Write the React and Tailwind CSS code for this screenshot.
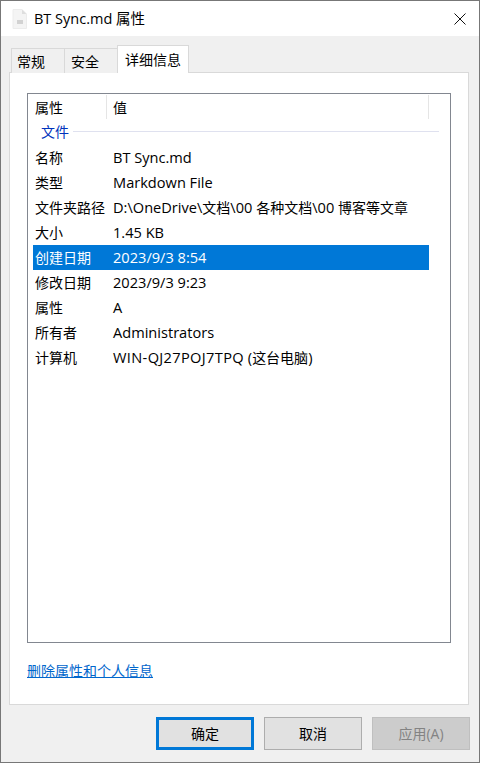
const Z = ({ children }) => <span className="text-[14px]">{children}</span>;

const rows = [
  ["名称", <>BT Sync.md</>],
  ["类型", <>Markdown File</>],
  ["文件夹路径", <>D:\OneDrive\<Z>文档</Z>\00 <Z>各种文档</Z>\00 <Z>博客等文章</Z></>],
  ["大小", <>1.45 KB</>],
  ["创建日期", <>2023/9/3 8:54</>, true],
  ["修改日期", <>2023/9/3 9:23</>],
  ["属性", <>A</>],
  ["所有者", <>Administrators</>],
  ["计算机", <><span className="tracking-[0.35px]">WIN-QJ27POJ7TPQ</span> (<Z>这台电脑</Z>)</>],
];

function FileIcon() {
  return (
    <svg width="16" height="20" viewBox="0 0 16 20" className="shrink-0">
      <path d="M1 0.5H10L14.5 5V19.5H1Z" fill="#f4f4f4" stroke="#ececec" />
      <path d="M10 0.5V5H14.5Z" fill="#dedede" />
      <rect x="5" y="11" width="6" height="4" fill="#d2d2d2" />
    </svg>
  );
}

function Btn({ children, cls }) {
  return (
    <div className={`w-[98px] h-[33px] flex items-center justify-center text-[14px] ${cls}`}>{children}</div>
  );
}

export default function App() {
  return (
    <div className="w-[480px] h-[763px] border border-[#777777] bg-[#f0f0f0] flex flex-col text-[14px] text-black overflow-hidden font-['Open_Sans','Noto_Sans_CJK_SC',sans-serif]">
      <div className="h-[35px] bg-white flex items-center pl-[11px] shrink-0">
        <FileIcon />
        <span className="ml-[6px] text-[14.5px] leading-[20px]">BT Sync.md 属性</span>
        <svg width="12" height="12" viewBox="0 0 12 12" className="ml-auto mr-[13px]">
          <path d="M0.5 0.5L11.5 11.5M11.5 0.5L0.5 11.5" stroke="#111" strokeWidth="1" fill="none" />
        </svg>
      </div>

      <div className="flex pl-[10px] pt-[10px] h-[37px] shrink-0 items-end relative z-10">
        <div className="w-[54px] h-[25px] border border-b-0 border-[#d9d9d9] bg-[#f0f0f0] flex items-center pl-[5px]">常规</div>
        <div className="w-[53px] h-[25px] border border-b-0 border-l-0 border-[#d9d9d9] bg-[#f0f0f0] flex items-center pl-[6px]">安全</div>
        <div className="w-[72px] h-[28px] -ml-px border border-b-0 border-[#d9d9d9] bg-white flex items-center pl-[7px]">详细信息</div>
      </div>

      <div className="mx-[8px] w-[460px] h-[633px] border border-[#d9d9d9] bg-white flex flex-col pl-[17px] pt-[19px] shrink-0 -mt-px">
        <div className="w-[424px] h-[550px] border border-[#828790] shrink-0 pl-[5px] pr-[21px] pt-[1px] mt-px">
          <div className="flex h-[24px] items-center">
            <div className="w-[74px] h-full border-r border-[#e5e5e5] flex items-center pl-[2px]">属性</div>
            <div className="flex-1 h-full border-r border-[#e5e5e5] flex items-center pl-[6px]">值</div>
          </div>
          <div className="flex items-center h-[24px] -mr-[10px] pl-[8px] text-[#0033bc]">
            <span>文件</span>
            <div className="flex-1 h-px bg-[#dfe1ef] ml-[4px]" />
          </div>
          <div className="mt-[2px]">
            {rows.map(([k, v, sel]) => (
              <div key={k} className={`flex h-[25px] items-center ${sel ? "bg-[#0078d7] text-white" : ""}`}>
                <div className="w-[80px] pl-[2px] whitespace-nowrap">{k}</div>
                <div className="whitespace-nowrap text-[14.6px]">{v}</div>
              </div>
            ))}
          </div>
        </div>
        <div className="mt-[19px] leading-[18px] text-[#0066cc] underline">删除属性和个人信息</div>
      </div>

      <div className="flex justify-end gap-[10px] pr-[9px] pt-[12px]">
        <Btn cls="bg-[#e1e1e1] border-[3px] border-[#0078d7]">确定</Btn>
        <Btn cls="bg-[#e1e1e1] border border-[#adadad]">取消</Btn>
        <Btn cls="bg-[#cccccc] border border-[#bfbfbf] text-[#838383]">应用(A)</Btn>
      </div>
    </div>
  );
}
